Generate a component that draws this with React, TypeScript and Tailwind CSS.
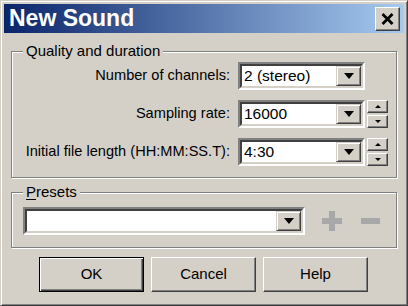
import React from "react";

const font = { fontFamily: '"Liberation Sans", Arial, sans-serif' };

function DownBtn({ w = 25, h = 20 }: { w?: number; h?: number }) {
  return (
    <div
      className="flex items-center justify-center bg-[#d4d0c8] border border-t-[#d4d0c8] border-l-[#d4d0c8] border-r-[#404040] border-b-[#404040] shadow-[inset_1px_1px_0_#fff,inset_-1px_-1px_0_#808080]"
      style={{ width: w, height: h }}
    >
      <svg width="10" height="6" viewBox="0 0 10 6">
        <path d="M0 0 H10 L5 6 Z" fill="#000" />
      </svg>
    </div>
  );
}

function Combo({ value, width }: { value: string; width: number }) {
  return (
    <div
      className="flex items-center h-[28px] bg-white border-2 border-t-[#808080] border-l-[#808080] border-r-white border-b-white"
      style={{ width }}
    >
      <div className="flex-1 h-full flex items-center border-2 border-t-[#404040] border-l-[#404040] border-r-[#d4d0c8] border-b-[#d4d0c8]">
        <span className="flex-1 pl-[2px] text-[15.5px] text-black leading-none">{value}</span>
        <DownBtn />
      </div>
    </div>
  );
}

function SpinBtn({ up }: { up: boolean }) {
  return (
    <div className="flex items-center justify-center w-[21px] h-[13px] bg-[#d4d0c8] border border-t-[#fff] border-l-[#fff] border-r-[#404040] border-b-[#404040] shadow-[inset_-1px_-1px_0_#808080]">
      <svg width="6" height="3" viewBox="0 0 6 3">
        {up ? <path d="M0 3 H6 L3 0 Z" fill="#000" /> : <path d="M0 0 H6 L3 3 Z" fill="#000" />}
      </svg>
    </div>
  );
}

function Spinner() {
  return (
    <div className="flex flex-col gap-[2px] ml-[2px]">
      <SpinBtn up />
      <SpinBtn up={false} />
    </div>
  );
}

function Group({ label, underline, className, children }: { label: string; underline?: boolean; className: string; children: React.ReactNode }) {
  return (
    <div className={"relative border border-[#808080] shadow-[inset_1px_1px_0_#fff,1px_1px_0_#fff] " + className}>
      <span className="absolute -top-[10px] left-[11px] px-[3px] bg-[#d4d0c8] text-[15px] leading-[18px] text-black">
        {underline ? (
          <>
            <span className="underline underline-offset-2">{label[0]}</span>
            {label.slice(1)}
          </>
        ) : (
          label
        )}
      </span>
      {children}
    </div>
  );
}

function Button({ label, def }: { label: string; def?: boolean }) {
  return (
    <div
      className={
        "w-[105px] h-[35px] flex items-center justify-center text-[15px] text-black bg-[#d4d0c8] " +
        (def
          ? "border border-black shadow-[inset_1px_1px_0_#fff,inset_-1px_-1px_0_#404040,inset_-2px_-2px_0_#808080]"
          : "border border-t-white border-l-white border-r-[#404040] border-b-[#404040] shadow-[inset_-1px_-1px_0_#808080]")
      }
    >
      {label}
    </div>
  );
}

export default function App() {
  return (
    <div className="w-[408px] h-[306px] bg-[#d4d0c8] overflow-hidden" style={font}>
      <div className="w-full h-full border border-t-[#d4d0c8] border-l-[#d4d0c8] border-r-[#404040] border-b-[#404040] shadow-[inset_1px_1px_0_#fff,inset_-1px_-1px_0_#808080] p-[3px] flex flex-col">
        {/* title bar */}
        <div className="h-[29px] flex items-center justify-between bg-[linear-gradient(to_right,#0a246a,#a6caf0)] pl-[5px] pr-[4px]">
          <span className="text-white font-bold text-[23px] leading-none">New Sound</span>
          <div className="w-[25px] h-[24px] flex items-center justify-center bg-[#d4d0c8] border border-t-white border-l-white border-r-[#404040] border-b-[#404040] shadow-[inset_-1px_-1px_0_#808080]">
            <svg width="13" height="12" viewBox="0 0 13 12">
              <path d="M1.5 1 L11.5 11 M11.5 1 L1.5 11" stroke="#000" strokeWidth="2.8" />
            </svg>
          </div>
        </div>

        {/* body */}
        <div className="flex flex-col pt-[18px] pl-[7px] pr-[7px]">
          <Group label="Quality and duration" className="h-[127px] pt-[10px]">
            <div className="flex flex-col gap-[10px]">
              {[
                { l: "Number of channels:", v: "2 (stereo)", s: false },
                { l: "Sampling rate:", v: "16000", s: true },
                { l: "Initial file length (HH:MM:SS.T):", v: "4:30", s: true },
              ].map((r) => (
                <div key={r.l} className="flex items-center h-[28px]">
                  <span className="w-[226px] text-right pr-[8px] text-[14.6px] text-black whitespace-nowrap">{r.l}</span>
                  <Combo value={r.v} width={127} />
                  {r.s && <Spinner />}
                </div>
              ))}
            </div>
          </Group>

          <Group label="Presets" underline className="mt-[14px] h-[56px] pl-[11px] pt-[14px]">
            <div className="flex items-center">
              <Combo value="" width={282} />
              <svg className="ml-[17px]" width="20" height="20" viewBox="0 0 20 20">
                <path d="M7 0 H13 V7 H20 V13 H13 V20 H7 V13 H0 V7 H7 Z" fill="#a8a8a8" />
              </svg>
              <svg className="ml-[19px]" width="19" height="6" viewBox="0 0 19 6">
                <rect x="0" y="0" width="19" height="6" fill="#a8a8a8" />
              </svg>
            </div>
          </Group>

          <div className="flex mt-[9px] pl-[28px] gap-[7px]">
            <Button label="OK" def />
            <Button label="Cancel" />
            <Button label="Help" />
          </div>
        </div>
      </div>
    </div>
  );
}
